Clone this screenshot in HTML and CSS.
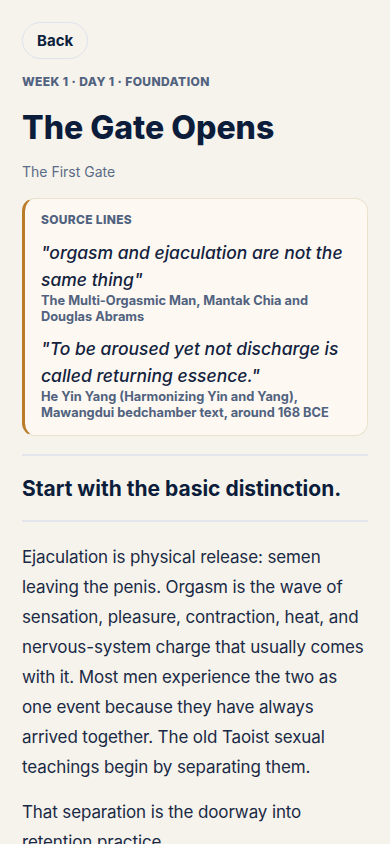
FILE: index.html
```html
<!DOCTYPE html>
<html lang="en">

<head>
  <meta charset="UTF-8" />
  <meta name="viewport" content="width=device-width, initial-scale=1.0" />
  <title>The Gate Opens</title>
  <link rel="stylesheet" href="styles.css">
</head>

<body>
  <div class="page">
    <div class="top">
      <span class="back-btn">Back</span>
    </div>

    <div class="eyebrow">Week 1 · Day 1 · Foundation</div>
    <h1 class="title">The Gate Opens</h1>
    <div class="subtitle">The First Gate</div>

    <div class="source-card">
      <div class="source-label">Source lines</div>
      <div class="source-item">
        <div class="quote">"orgasm and ejaculation are not the same thing"</div>
        <div class="cite">The Multi-Orgasmic Man, Mantak Chia and Douglas Abrams</div>
      </div>
      <div class="source-item">
        <div class="quote">"To be aroused yet not discharge is called returning essence."</div>
        <div class="cite">He Yin Yang (Harmonizing Yin and Yang), Mawangdui bedchamber text, around 168 BCE</div>
      </div>
    </div>

    <div class="section-head">
      <h2>Start with the basic distinction.</h2>
    </div>

    <div class="body-text">
      <p>Ejaculation is physical release: semen leaving the penis. Orgasm is the wave of sensation, pleasure, contraction, heat, and nervous-system charge that usually comes with it. Most men experience the two as one event because they have always arrived together. The old Taoist sexual teachings begin by separating them.</p>
      <p>That separation is the doorway into retention practice.</p>
    </div>
  </div>
</body>

</html>
```

FILE: styles.css
```css
* {
  margin: 0;
  padding: 0;
  box-sizing: border-box;
}

body {
  background: #f6f3ec;
  color: #12213d;
  font-family: Inter, "Noto Sans", sans-serif;
}

.page {
  padding: 22px 22px 40px;
}

.top {
  display: flex;
}

.back-btn {
  display: inline-block;
  height: 37px;
  line-height: 35px;
  padding: 0 14px;
  border: 1px solid #dde3ec;
  border-radius: 19px;
  font-size: 15px;
  font-weight: 700;
  color: #0d1f3c;
  cursor: pointer;
}

.eyebrow {
  margin-top: 15px;
  font-size: 12px;
  line-height: 16px;
  font-weight: 800;
  letter-spacing: 0.4px;
  text-transform: uppercase;
  color: #51627f;
}

.title {
  margin-top: 19px;
  font-size: 32px;
  line-height: 38px;
  font-weight: 800;
  color: #0c1d3b;
}

.subtitle {
  margin-top: 15px;
  font-size: 14px;
  line-height: 20px;
  color: #5b6c87;
}

/* source card */
.source-card {
  margin-top: 16px;
  padding: 13px 16px 15px 16px;
  background: #fdf9f2;
  border: 1px solid #ebe2cd;
  border-left: 3px solid #b97c28;
  border-radius: 13px;
}

.source-label {
  font-size: 12px;
  line-height: 16px;
  font-weight: 800;
  letter-spacing: 0.3px;
  text-transform: uppercase;
  color: #51627f;
}

.source-item {
  margin-top: 11px;
}

.source-item + .source-item {
  margin-top: 11px;
}

.quote {
  font-size: 17.5px;
  line-height: 27px;
  font-style: italic;
  font-weight: 500;
  color: #13223e;
}

.cite {
  font-size: 12.8px;
  line-height: 15.5px;
  font-weight: 700;
  color: #51627f;
}

/* section heading */
.section-head {
  margin-top: 18px;
  padding: 19px 0 17px;
  border-top: 2px solid #e3e7ed;
  border-bottom: 2px solid #e3e7ed;
}

.section-head h2 {
  font-size: 21px;
  line-height: 28px;
  font-weight: 700;
  color: #0c1d3b;
}

.body-text {
  margin-top: 20px;
}

.body-text p {
  font-size: 17px;
  line-height: 30px;
  letter-spacing: -0.12px;
  color: #1a2a45;
}

.body-text p + p {
  margin-top: 15px;
}
```
